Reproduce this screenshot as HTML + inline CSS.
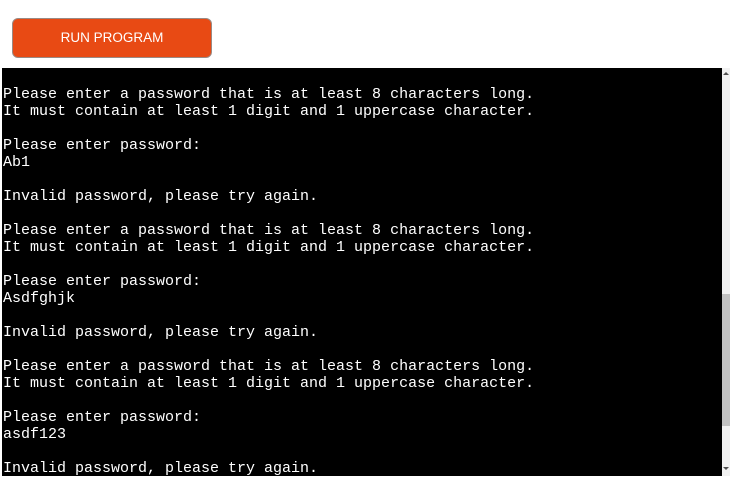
<!DOCTYPE html>
<html><head><style>
html,body{margin:0;padding:0;background:#fff;width:730px;height:481px;overflow:hidden}
.btn{position:absolute;left:12px;top:18px;width:198px;height:38px;background:#e84a14;border:1px solid #9a8a84;border-radius:6px;color:#fff;font:13.5px "Liberation Sans",sans-serif;text-align:center;line-height:38px;}
.term{position:absolute;left:2px;top:68px;width:720px;height:408px;background:#000;overflow:hidden}
pre{margin:0;padding:0;color:#fff;font:15px/17px "Liberation Mono",monospace;position:absolute;left:1px;top:1px}
.sb{position:absolute;left:722px;top:68px;width:8px;height:408px;background:#f1f1f1}
.th{position:absolute;left:0;top:226px;width:8px;height:132px;background:#c1c1c1}
.up{position:absolute;left:1px;top:4px;width:0;height:0;border-left:3px solid transparent;border-right:3px solid transparent;border-bottom:3px solid #505050}
.dn{position:absolute;left:1px;bottom:6px;width:0;height:0;border-left:3px solid transparent;border-right:3px solid transparent;border-top:3px solid #505050}
</style></head><body>
<div class="btn">RUN PROGRAM</div>
<div class="term"><pre>

Please enter a password that is at least 8 characters long.
It must contain at least 1 digit and 1 uppercase character.

Please enter password:
Ab1

Invalid password, please try again.

Please enter a password that is at least 8 characters long.
It must contain at least 1 digit and 1 uppercase character.

Please enter password:
Asdfghjk

Invalid password, please try again.

Please enter a password that is at least 8 characters long.
It must contain at least 1 digit and 1 uppercase character.

Please enter password:
asdf123

Invalid password, please try again.
</pre></div>
<div class="sb"><div class="up"></div><div class="th"></div><div class="dn"></div></div>
</body></html>
